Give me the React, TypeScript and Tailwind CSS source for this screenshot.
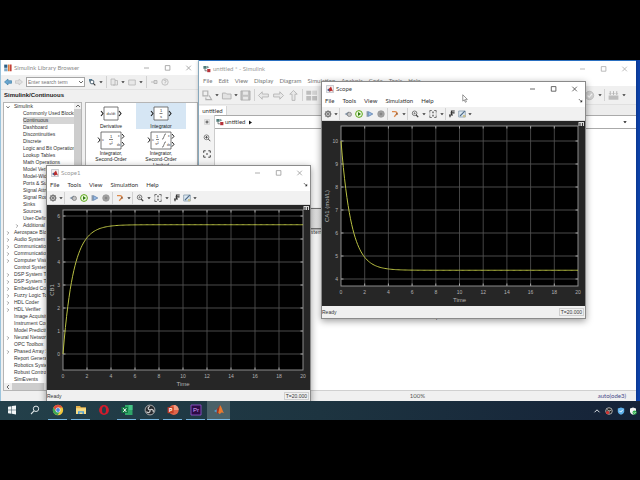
import React from 'react';

const UI = "font-['Lato','Liberation_Sans',sans-serif]";
const TAHOMA = "font-['Liberation_Sans','DejaVu_Sans',sans-serif]";

type Row = { label: string; depth: number; arrow?: 'open' | 'closed'; selected?: boolean };

const treeRows: Row[] = [
  { label: 'Simulink', depth: 0, arrow: 'open' },
  { label: 'Commonly Used Blocks', depth: 1 },
  { label: 'Continuous', depth: 1, selected: true },
  { label: 'Dashboard', depth: 1 },
  { label: 'Discontinuities', depth: 1 },
  { label: 'Discrete', depth: 1 },
  { label: 'Logic and Bit Operations', depth: 1 },
  { label: 'Lookup Tables', depth: 1 },
  { label: 'Math Operations', depth: 1 },
  { label: 'Model Verification', depth: 1 },
  { label: 'Model-Wide Utilities', depth: 1 },
  { label: 'Ports & Subsystems', depth: 1 },
  { label: 'Signal Attributes', depth: 1 },
  { label: 'Signal Routing', depth: 1 },
  { label: 'Sinks', depth: 1 },
  { label: 'Sources', depth: 1 },
  { label: 'User-Defined Functions', depth: 1 },
  { label: 'Additional Math & Discrete', depth: 1, arrow: 'closed' },
  { label: 'Aerospace Blockset', depth: 0, arrow: 'closed' },
  { label: 'Audio System Toolbox', depth: 0, arrow: 'closed' },
  { label: 'Communications System Toolbox', depth: 0, arrow: 'closed' },
  { label: 'Communications System Toolbox HDL', depth: 0, arrow: 'closed' },
  { label: 'Computer Vision System Toolbox', depth: 0, arrow: 'closed' },
  { label: 'Control System Toolbox', depth: 0 },
  { label: 'DSP System Toolbox', depth: 0, arrow: 'closed' },
  { label: 'DSP System Toolbox HDL', depth: 0, arrow: 'closed' },
  { label: 'Embedded Coder', depth: 0, arrow: 'closed' },
  { label: 'Fuzzy Logic Toolbox', depth: 0, arrow: 'closed' },
  { label: 'HDL Coder', depth: 0, arrow: 'closed' },
  { label: 'HDL Verifier', depth: 0, arrow: 'closed' },
  { label: 'Image Acquisition Toolbox', depth: 0 },
  { label: 'Instrument Control Toolbox', depth: 0 },
  { label: 'Model Predictive Control', depth: 0 },
  { label: 'Neural Network Toolbox', depth: 0, arrow: 'closed' },
  { label: 'OPC Toolbox', depth: 0 },
  { label: 'Phased Array System', depth: 0, arrow: 'closed' },
  { label: 'Report Generator', depth: 0 },
  { label: 'Robotics System', depth: 0 },
  { label: 'Robust Control', depth: 0 },
  { label: 'SimEvents', depth: 0 },
];

function WindowButtons({ color }: { color: string }) {
  return (
    <div className="ml-auto flex shrink-0 gap-3">
      <button aria-label="Minimize" className={`h-2 w-[9px] ${color}`}>
        <svg viewBox="0 0 9 8" className="h-2 w-[9px]"><path d="M2 4h5" stroke="currentColor" strokeWidth=".8" /></svg>
      </button>
      <button aria-label="Maximize" className={`h-2 w-[9px] ${color}`}>
        <svg viewBox="0 0 9 8" className="h-2 w-[9px]"><path d="M2.3 1.6h4.6v4.6H2.3z" fill="none" stroke="currentColor" strokeWidth=".8" /></svg>
      </button>
      <button aria-label="Close" className={`h-2 w-[9px] ${color}`}>
        <svg viewBox="0 0 9 8" className="h-2 w-[9px]"><path d="M2.3 1.7l4.6 4.6M6.9 1.7L2.3 6.3" stroke="currentColor" strokeWidth=".8" /></svg>
      </button>
    </div>
  );
}

function MatlabIcon() {
  return (
    <svg viewBox="0 0 8 8" className="size-2 shrink-0">
      <path d="M.5 .5h7v7h-7z" fill="#f3eeee" stroke="#aab0b8" strokeWidth=".6" />
      <path d="M1 5l2-1.4L4.4 6l-1 .6z" fill="#3b5a8c" />
      <path d="M2.8 4L5 1.6l2 5-1.8-.9-1.6 1.1z" fill="#b92c2c" />
    </svg>
  );
}

function SimulinkIcon() {
  return (
    <svg viewBox="0 0 8 8" className="size-2 shrink-0">
      <path d="M.4 1h3.2v2.8H.4z" fill="#4f7a77" />
      <path d="M4 .8l2.4 1.4L4 3.6z" fill="#7d9694" />
      <path d="M4.2 4h3.2v3.2H4.2z" fill="#b5323a" />
      <path d="M2 4v1.8h2" fill="none" stroke="#555" strokeWidth=".7" />
    </svg>
  );
}

function LibraryIcon() {
  return (
    <svg viewBox="0 0 8 8" className="size-2 shrink-0">
      <path d="M.2.6h3.2v3.2H.2z" fill="#2c5f86" />
      <path d="M4 .6h1.7v6.6H4z" fill="#e07a3c" />
      <path d="M.2 4.3h3.4v3H.2z" fill="#7fa9c6" />
      <path d="M6 .6h1.6v6.6H6z" fill="#c3423a" />
    </svg>
  );
}

function Caret({ color = '#333' }: { color?: string }) {
  return (
    <svg viewBox="0 0 4 4" className="size-1 shrink-0">
      <path d="M.3 1.2h3.4L2 3.2z" fill={color} />
    </svg>
  );
}

function Separator() {
  return <span className="h-3 w-px shrink-0 bg-[#d2d2d2]" />;
}

function DockArrow() {
  return (
    <svg viewBox="0 0 5 5" className="size-[5px]">
      <path d="M.8 1l2 2" stroke="#444" strokeWidth=".7" />
      <path d="M4.2 1.8v2.4H1.8z" fill="#333" />
    </svg>
  );
}

function ToolButton({ label, children, wide }: { label: string; children: React.ReactNode; wide?: boolean }) {
  return (
    <button aria-label={label} className={wide ? 'h-[13px] w-[13px] shrink-0' : 'h-2 w-2 shrink-0'}>
      <svg viewBox="0 0 8 8" className="h-full w-full">{children}</svg>
    </button>
  );
}

function ScopeToolbar() {
  return (
    <div className="flex h-[14px] shrink-0 items-center border-b border-[#d9d9d9] bg-[#f1f1f1] pl-[2px]">
      <ToolButton label="Configuration">
        <circle cx="4" cy="4" r="2.5" fill="#ddd" stroke="#777" strokeWidth="1.3" />
        <circle cx="4" cy="4" r=".9" fill="#555" />
        <path d="M4 .3v1M4 6.7v1M.3 4h1M6.7 4h1M1.4 1.4l.7.7M5.9 5.9l.7.7M6.6 1.4l-.7.7M2.1 5.9l-.7.7" stroke="#777" strokeWidth=".8" />
      </ToolButton>
      <span className="flex items-center gap-px pl-[2px]"><Caret /><Separator /></span>
      <span className="ml-1 flex gap-[3px]">
        <ToolButton label="Step back">
          <path d="M.6 4L5 1.4v5.2z" fill="#8294a8" />
          <circle cx="5.4" cy="4.4" r="2.1" fill="#c4c4c4" stroke="#777" strokeWidth=".7" />
        </ToolButton>
        <ToolButton label="Run">
          <circle cx="4" cy="4" r="3.4" fill="#eefbe0" stroke="#5da51c" strokeWidth="1" />
          <path d="M3 2.1L6 4 3 5.9z" fill="#2f7a12" />
        </ToolButton>
        <ToolButton label="Step forward">
          <path d="M1.2 1.2v5.6" stroke="#60758d" strokeWidth="1" />
          <path d="M2.4 1.6L6.8 4 2.4 6.4z" fill="#9bbbe3" stroke="#5579a8" strokeWidth=".7" />
        </ToolButton>
        <ToolButton label="Stop">
          <circle cx="4" cy="4" r="3.3" fill="#a5a5a5" stroke="#8b8b8b" strokeWidth=".6" />
          <path d="M2.7 2.7h2.6v2.6H2.7z" fill="#858585" />
        </ToolButton>
      </span>
      <span className="ml-[2px] flex items-center gap-[3px]">
        <Separator />
        <ToolButton label="Highlight signal">
          <path d="M1 1.6h3a2 2 0 0 1 2 2.2L3.2 6.8" fill="none" stroke="#dd8a4c" strokeWidth="1.3" />
          <path d="M4.4 4.6h2.8L6 2.6z" fill="#8a5a3c" />
        </ToolButton>
        <Caret />
      </span>
      <span className="ml-px flex items-center gap-[3px]">
        <Separator />
        <ToolButton label="Zoom">
          <circle cx="3.6" cy="3.3" r="2.3" fill="#fff" stroke="#666" strokeWidth=".9" />
          <path d="M2.4 3.3h2.4M3.6 2.1v2.4" stroke="#555" strokeWidth=".6" />
          <path d="M5.2 5l2 2.2" stroke="#444" strokeWidth="1.2" />
        </ToolButton>
        <Caret />
        <ToolButton label="Scale axes">
          <path d="M.8 2.5V.5h2M5.2.5h2v2M7.2 5.500v2h-2M2.800 7.500h-2v-2" fill="none" stroke="#666" strokeWidth=".9" />
          <path d="M4 1.500v1.800M4 6.500V4.700" stroke="#333" strokeWidth="1.100" />
          <path d="M.8 2.500v3M7.200 2.500v3" stroke="#aaa" strokeWidth=".7" />
        </ToolButton>
        <Caret />
      </span>
      <span className="ml-px flex items-center gap-[2px]">
        <Separator />
        <ToolButton label="Triggers">
          <path d="M2 7.2V5h1.5V1h3.2M1 5h4M2.6 2.8h4" fill="none" stroke="#333" strokeWidth="1.2" />
        </ToolButton>
        <ToolButton label="Cursor measurements">
          <path d="M.7 1h6.6v6H.7z" fill="#dce8f2" stroke="#8499ab" strokeWidth=".8" />
          <path d="M2 6L6.8 1.2" stroke="#506d88" strokeWidth="1.1" />
          <path d="M5 5h2.4v2.2H5z" fill="#c9c08e" />
        </ToolButton>
        <Caret />
      </span>
    </div>
  );
}

type PlotProps = {
  left: number;
  width: number;
  // y of the topmost labelled gridline
  firstY: number;
  yTicks: number[];
  yLabel: string;
  start: number;
  end: number;
};

type ScopeProps = PlotProps & { title: string; titleColor: string; buttonColor: string };

function ScopePlot({ left, width, firstY, yTicks, yLabel, start, end }: PlotProps) {
  const top = 5;
  const bottom = 165;
  const right = left + width;
  const step = 23;
  const x = (t: number) => left + (t / 20) * width;
  const y = (v: number) => firstY + (yTicks[0] - v) * step;
  const curve = Array.from({ length: 201 }, (_, i) => {
    const t = i / 10;
    const v = end + (start - end) * Math.exp(-t / 0.87);
    return `${i ? 'L' : 'M'}${x(t).toFixed(2)} ${y(v).toFixed(2)}`;
  }).join('');
  const xTicks = [0, 2, 4, 6, 8, 10, 12, 14, 16, 18, 20];

  return (
    <svg viewBox="0 0 263 185" className="block w-full bg-[#262626] font-['Liberation_Sans',sans-serif]">
      <rect x={left} y={top} width={width} height={bottom - top} fill="#000" />
      {xTicks.slice(1, -1).map((t) => (
        <g key={t}>
          <path d={`M${x(t)} ${top}V${bottom}`} stroke="#4c4c4c" strokeWidth=".9" />
          <path d={`M${x(t)} ${top}v2.5M${x(t)} ${bottom}v-2.5`} stroke="#b0b0b0" strokeWidth=".9" />
        </g>
      ))}
      {yTicks.map((v) => (
        <g key={v}>
          <path d={`M${left} ${y(v)}H${right}`} stroke="#525252" strokeWidth=".9" />
          <path d={`M${left} ${y(v)}h2.5M${right} ${y(v)}h-2.5`} stroke="#b0b0b0" strokeWidth=".9" />
          <text x={left - 3} y={y(v) + 2} textAnchor="end" fontSize="5" fill="#b4b4b4">{v}</text>
        </g>
      ))}
      <rect x={left} y={top} width={width} height={bottom - top} fill="none" stroke="#9a9a9a" strokeWidth=".9" />
      <path d={curve} fill="none" stroke="#b9c043" strokeWidth="1" />
      {xTicks.map((t) => (
        <text key={t} x={x(t)} y={bottom + 8} textAnchor="middle" fontSize="5" fill="#b4b4b4">{t}</text>
      ))}
      <text x={left + width / 2} y={bottom + 16} textAnchor="middle" fontSize="6" fill="#b4b4b4">Time</text>
      <text transform="translate(7 85) rotate(-90)" textAnchor="middle" fontSize="6" fill="#b4b4b4">{yLabel}</text>
      <path d="M256.5 1h5.5v4h-5.5z" fill="#d8d8d8" />
      <path d="M258 2v3M260.5 2v3" stroke="#222" strokeWidth=".9" />
    </svg>
  );
}

function ScopeWindow({ title, titleColor, buttonColor, ...plot }: ScopeProps) {
  return (
    <section className={`flex flex-col overflow-hidden border border-[#8a8a8a] bg-white shadow-[0_2px_7px_rgba(0,0,0,0.4)] ${UI}`}>
      <header className="flex h-3 items-center gap-[2px] pl-1 pr-[6px] pt-px">
        <MatlabIcon />
        <h2 className={`text-[6px] leading-[8px] ${titleColor}`}>{title}</h2>
        <WindowButtons color={buttonColor} />
      </header>
      <nav className="flex h-[13px] items-center gap-2 pl-[3px] pr-[2px] text-[6px] leading-[8px] text-[#333]">
        <button>File</button>
        <button>Tools</button>
        <button>View</button>
        <button>Simulation</button>
        <button>Help</button>
        <span className="ml-auto"><DockArrow /></span>
      </nav>
      <ScopeToolbar />
      <ScopePlot {...plot} />
      <footer className={`flex h-3 items-center justify-between bg-[#f0f0f0] pr-px text-[5px] leading-[6px] text-[#333] ${TAHOMA}`}>
        <span>Ready</span>
        <span className="border border-[#cfcfcf] px-px">T=20.000</span>
      </footer>
    </section>
  );
}

function LibraryBlock({ name, selected, children }: { name: string[]; selected?: boolean; children: React.ReactNode }) {
  return (
    <figure className={`flex w-[50px] flex-col items-center ${selected ? 'bg-[#d6e6f4]' : ''}`}>
      <svg viewBox="0 0 28 20" className="h-5 w-7">{children}</svg>
      <figcaption className="text-center text-[5px] leading-[6px] text-[#222]">
        {name.map((line) => <span key={line} className="block">{line}</span>)}
      </figcaption>
    </figure>
  );
}

function LibraryBrowser() {
  return (
    <section className={`flex min-h-0 flex-col border-l border-r border-[#9cc4dc] bg-[#f0f0f0] ${TAHOMA}`}>
      <header className={`flex h-[15px] shrink-0 items-center gap-[2px] bg-white pl-[3px] pr-[5px] ${UI}`}>
        <LibraryIcon />
        <h2 className="text-[6px] leading-[8px] text-[#8c8c8c]">Simulink Library Browser</h2>
        <WindowButtons color="text-[#999]" />
      </header>
      <div className="flex h-[15px] shrink-0 items-center gap-[3px] border-b border-[#e2e2e2] pl-[3px]">
        <ToolButton label="Back"><path d="M.5 4L4 1v1.7h3.5v2.6H4V7z" fill="#69a5cf" stroke="#33779f" strokeWidth=".6" /></ToolButton>
        <ToolButton label="Forward"><path d="M7.5 4L4 1v1.7H.5v2.6H4V7z" fill="#e1e1e1" stroke="#bbb" strokeWidth=".6" /></ToolButton>
        <label className="flex h-[10px] w-[59px] items-center border border-[#a5a5a5] bg-white pl-px">
          <input aria-label="Search term" placeholder="Enter search term" className="min-w-0 flex-1 text-[5px] leading-[6px] outline-none placeholder:text-[#777]" />
          <svg viewBox="0 0 6 4" className="h-1 w-[6px]"><path d="M1 1l2 2 2-2" fill="none" stroke="#444" strokeWidth=".8" /></svg>
        </label>
        <ToolButton label="Search">
          <path d="M1 1h3v2.5H1z" fill="#55809b" />
          <circle cx="4" cy="4" r="1.9" fill="#fff" stroke="#3e5666" strokeWidth=".9" />
          <path d="M5.3 5.3l2 2" stroke="#333" strokeWidth="1.1" />
        </ToolButton>
        <Caret />
        <Separator />
        <ToolButton label="New"><path d="M1 1h4v6H1zM5 2.5h2.5V7H3" fill="#e8e8e8" stroke="#b5b5b5" strokeWidth=".8" /></ToolButton>
        <Caret />
        <ToolButton label="Open"><path d="M.7 2h6.6v5H.7z" fill="#e8e8e8" stroke="#b5b5b5" strokeWidth=".8" /></ToolButton>
        <Caret />
        <Separator />
        <ToolButton label="Pin"><path d="M1 4h3M4 2.5h3v3H4z" fill="#ddd" stroke="#b0b0b0" strokeWidth=".8" /></ToolButton>
        <ToolButton label="Help">
          <circle cx="4" cy="4" r="3.2" fill="#eee" stroke="#b5b5b5" strokeWidth=".8" />
          <path d="M2.9 3a1.1 1.1 0 1 1 1.1 1.3v.7M4 5.6v.6" fill="none" stroke="#aaa" strokeWidth=".7" />
        </ToolButton>
      </div>
      <h3 className="h-3 shrink-0 pl-[3px] pt-px text-[6px] font-bold leading-[8px] text-[#222]">Simulink/Continuous</h3>
      <div className="flex min-h-0 flex-1 gap-[3px] pb-[10px] pl-[2px]">
        <div className="flex w-[79px] shrink-0 flex-col border border-[#b5b5b5] bg-white">
          <div className="flex min-h-0 flex-1">
            <ul className="min-w-0 flex-1 overflow-hidden">
              {treeRows.map((row) => (
                <li key={row.label} className={`flex h-[7px] items-center whitespace-nowrap text-[5px] leading-[7px] text-[#333] ${row.depth ? 'pl-[11px]' : 'pl-[2px]'}`}>
                  <svg viewBox="0 0 4 4" className="mr-1 size-1 shrink-0">
                    {row.arrow === 'open' && <path d="M.4 1.2L2 3 3.6 1.2" fill="none" stroke="#444" strokeWidth=".7" />}
                    {row.arrow === 'closed' && <path d="M1.2.4L2.8 2 1.2 3.6" fill="none" stroke="#777" strokeWidth=".7" />}
                  </svg>
                  <span className={row.selected ? 'w-full bg-[#d5d5d5]' : ''}>{row.label}</span>
                </li>
              ))}
            </ul>
            <div className="flex w-[7px] shrink-0 flex-col items-center bg-[#f0f0f0]">
              <svg viewBox="0 0 6 6" className="size-[6px]"><path d="M1 4l2-2 2 2" fill="none" stroke="#444" strokeWidth=".8" /></svg>
              <span className="h-14 w-full bg-[#cdcdcd]" />
            </div>
          </div>
          <div className="flex h-[7px] shrink-0 items-center bg-[#f0f0f0]">
            <svg viewBox="0 0 8 6" className="h-[6px] w-2"><path d="M5 1L3 3l2 2" fill="none" stroke="#444" strokeWidth=".8" /></svg>
            <span className="h-full w-8 bg-[#cdcdcd]" />
          </div>
        </div>
        <div className="flex flex-1 flex-wrap content-start gap-y-px border border-[#b5b5b5] bg-white">
          <LibraryBlock name={['Derivative']}>
            <path d="M7 4h14v13H7z" fill="#fff" stroke="#555" strokeWidth=".8" />
            <path d="M4 8l2 2.5L4 13M22 8l2 2.5L22 13" fill="none" stroke="#222" strokeWidth="1.1" />
            <text x="14" y="12" textAnchor="middle" fontSize="4" fill="#444">du/dt</text>
          </LibraryBlock>
          <LibraryBlock name={['Integrator']} selected>
            <path d="M7 4h14v13H7z" fill="#fff" stroke="#555" strokeWidth=".8" />
            <path d="M4 8l2 2.5L4 13M22 8l2 2.5L22 13" fill="none" stroke="#222" strokeWidth="1.1" />
            <path d="M12.5 10.5h3" stroke="#333" strokeWidth=".6" />
            <text x="14" y="9" textAnchor="middle" fontSize="4" fill="#333">1</text>
            <text x="14" y="15" textAnchor="middle" fontSize="4" fill="#333">s</text>
          </LibraryBlock>
          <LibraryBlock name={['Integrator,', 'Second-Order']}>
            <path d="M4 2h20v17H4z" fill="#fff" stroke="#555" strokeWidth=".8" />
            <path d="M1 7.5L3 10l-2 2.5M25 4l2 2.3-2 2.3M25 12l2 2.3-2 2.3" fill="none" stroke="#222" strokeWidth="1" />
            <path d="M12 9.5h4" stroke="#333" strokeWidth=".6" />
            <text x="5" y="11" fontSize="3" fill="#333">u</text>
            <text x="14" y="8" textAnchor="middle" fontSize="4" fill="#333">1</text>
            <text x="14" y="15" textAnchor="middle" fontSize="4" fill="#333">s²</text>
            <text x="21" y="7" fontSize="3" fill="#333">x</text>
            <text x="20" y="16" fontSize="3" fill="#333">dx</text>
          </LibraryBlock>
          <LibraryBlock name={['Integrator,', 'Second-Order', 'Limited']}>
            <path d="M4 2h20v17H4z" fill="#fff" stroke="#555" strokeWidth=".8" />
            <path d="M1 7.5L3 10l-2 2.5M25 4l2 2.3-2 2.3M25 12l2 2.3-2 2.3" fill="none" stroke="#222" strokeWidth="1" />
            <path d="M9 9.5h3M15 9h1l2-5h1M15 17h1l2-5h1" fill="none" stroke="#333" strokeWidth=".6" />
            <text x="5" y="11" fontSize="3" fill="#333">u</text>
            <text x="10" y="8" textAnchor="middle" fontSize="4" fill="#333">1</text>
            <text x="10" y="15" textAnchor="middle" fontSize="4" fill="#333">s²</text>
            <text x="21" y="7" fontSize="3" fill="#333">x</text>
            <text x="20" y="16" fontSize="3" fill="#333">dx</text>
          </LibraryBlock>
        </div>
      </div>
    </section>
  );
}

function ModelEditor() {
  return (
    <section className={`flex min-h-0 flex-col border-t border-[#2a6fc0] bg-white shadow-[0_0_4px_rgba(0,0,0,0.35)] ${UI}`}>
      <header className="flex h-[14px] shrink-0 items-center gap-[2px] pl-1 pr-[7px] pt-px">
        <SimulinkIcon />
        <h2 className="text-[6px] leading-[8px] text-[#999]">untitled * - Simulink</h2>
        <WindowButtons color="text-[#aaa]" />
      </header>
      <nav className="flex h-[11px] shrink-0 items-center gap-[6px] pl-1 text-[6px] leading-[8px] text-[#777]">
        {['File', 'Edit', 'View', 'Display', 'Diagram', 'Simulation', 'Analysis', 'Code', 'Tools', 'Help'].map((item) => (
          <button key={item}>{item}</button>
        ))}
      </nav>
      <div className="flex h-[19px] shrink-0 items-center justify-between border-b border-[#e0e0e0] bg-[#f0f0f0] pl-[2px] pr-[10px]">
        <div className="flex items-center gap-[2px]">
          <div className="flex items-center gap-px">
            <ToolButton wide label="Undo"><path d="M1.2 1.2h3v3h-3zM3 5.200v1.300h3.500L5 4" fill="none" stroke="#b0b0b0" strokeWidth=".7" /></ToolButton>
            <Caret />
            <ToolButton wide label="Open"><path d="M1.5 2.5h2l.6.6h2.7v3H1.5z" fill="#e2e2e2" stroke="#b4b4b4" strokeWidth=".6" /></ToolButton>
            <Caret />
            <ToolButton wide label="Save">
              <path d="M1.2 1.2h5.6v5.6H1.2z" fill="#c2c2c2" stroke="#aaa" strokeWidth=".5" />
              <path d="M2.5 1.5h3v2h-3zM2.5 4.7h3v1.8h-3z" fill="#e8e8e8" />
            </ToolButton>
          </div>
          <Separator />
          <ToolButton wide label="Back"><path d="M.9 4l2.3-2.3v1.400h3.800v1.800H3.200v1.400z" fill="#e8e8e8" stroke="#b0b0b0" strokeWidth=".5" /></ToolButton>
          <ToolButton wide label="Forward"><path d="M7.100 4L4.800 1.700v1.400H1v1.800h3.800v1.400z" fill="#e8e8e8" stroke="#b0b0b0" strokeWidth=".5" /></ToolButton>
          <ToolButton wide label="Up"><path d="M4 .9l2.300 2.300H4.900V7H3.100V3.200H1.700z" fill="#e8e8e8" stroke="#b0b0b0" strokeWidth=".5" /></ToolButton>
          <Separator />
          <ToolButton wide label="Library">
            <path d="M.8 1h3v2.6h-3zM.8 4.3h3V7h-3zM4.4 4.3h3V7h-3z" fill="#bdbdbd" />
            <path d="M4.4 1h3v2.6h-3z" fill="#d2d2d2" />
          </ToolButton>
        </div>
        <div className="flex items-center gap-[2px]">
          <ToolButton wide label="Check">
            <circle cx="4" cy="4" r="2.6" fill="#d0d0d0" stroke="#bdbdbd" strokeWidth=".5" />
            <path d="M2.8 4l1 1 1.7-2" fill="none" stroke="#f5f5f5" strokeWidth=".8" />
          </ToolButton>
          <Caret />
          <Separator />
          <ToolButton wide label="Build">
            <path d="M1 4h6v2.6H1z" fill="#bdbdbd" />
            <path d="M2 1.3v2M4 1.3v2M6 1.3v2M1.4 2.7l.6.7.6-.7M3.4 2.7l.6.7.6-.7M5.4 2.7l.6.7.6-.7" fill="none" stroke="#aaa" strokeWidth=".5" />
          </ToolButton>
          <Caret />
        </div>
      </div>
      <div className="flex h-[10px] shrink-0 items-end bg-[#ededed]">
        <button className="h-[9px] w-7 border-r border-[#d5d5d5] bg-white text-[6px] leading-[8px] text-[#333]">untitled</button>
      </div>
      <div className="flex min-h-0 flex-1">
        <aside className="flex w-4 shrink-0 flex-col items-center gap-2 border-r border-[#ccc] bg-[#f3f3f3] pt-[3px]">
          <ToolButton label="Hide browser"><path d="M1.5 1.5h5v5h-5z" fill="#e5e5e5" stroke="#ccc" strokeWidth=".6" /><path d="M2.5 4h3M4 2.5v3" stroke="#444" strokeWidth=".9" /></ToolButton>
          <ToolButton label="Zoom"><circle cx="3.5" cy="3.3" r="2.4" fill="#fff" stroke="#666" strokeWidth=".8" /><path d="M2.2 3.3h2.6M3.5 2v2.6M5.3 5l2 2.2" stroke="#444" strokeWidth=".9" /></ToolButton>
          <ToolButton label="Fit to view"><path d="M.7 2.8V.8h2M5.3.8h2v2M7.3 5.2v2h-2M2.7 7.2h-2v-2" fill="none" stroke="#444" strokeWidth="1" /><path d="M3 3h2v2H3z" fill="#999" /></ToolButton>
        </aside>
        <div className="flex min-w-0 flex-1 flex-col">
          <div className="flex h-[14px] shrink-0 items-center gap-px border-y border-[#aaa] pl-px pr-[9px] text-[6px] leading-[8px] text-[#333]">
            <SimulinkIcon />
            <span>untitled</span>
            <svg viewBox="0 0 5 5" className="ml-[2px] size-[5px]"><path d="M1 .5l3 2-3 2z" fill="#111" /></svg>
            <span className="ml-auto"><Caret color="#111" /></span>
          </div>
          <div className="relative min-h-0 flex-1 overflow-hidden">
            {/* blocks on the model canvas */}
            <div className="absolute left-[72px] top-[79px] h-[21px] w-[60px] border border-[#777] bg-linear-to-r from-[#d8d8d8] to-[#f6f6f6] shadow-[1px_1px_2px_rgba(0,0,0,0.4)]" />
            <span className="absolute left-[91px] top-[100px] text-[5px] leading-[6px] text-[#444]">System</span>
            <span className="absolute left-[213px] top-[185px] text-[5px] leading-[6px] text-[#333]">Scope</span>
          </div>
        </div>
      </div>
      <footer className="grid h-[11px] shrink-0 grid-cols-3 items-center border-t border-[#d0d0d0] bg-[#f0f0f0] text-[6px] leading-[8px] text-[#555]">
        <span />
        <span className="text-center">100%</span>
        <span className="pr-[10px] text-right text-[#4a4a8a]">auto(ode3)</span>
      </footer>
    </section>
  );
}

function TaskButton({ label, running, active, children }: { label: string; running?: boolean; active?: boolean; children: React.ReactNode }) {
  return (
    <button
      aria-label={label}
      className={`flex h-full items-center justify-center border-b ${active ? 'w-[23px] bg-[#4a6168]' : 'mx-[2px] w-[19px]'} ${running ? 'border-[#76b4dd]' : 'border-transparent'}`}
    >
      <svg viewBox="0 0 12 12" className="size-3">{children}</svg>
    </button>
  );
}

function Taskbar() {
  return (
    <footer className="flex h-[19px] shrink-0 items-center bg-linear-to-r from-[#23404a] via-[#1d3440] to-[#152238]">
      <TaskButton label="Start">
        <path d="M2 2.7l3.5-.5v3.5H2zM6 2.1l4-.6v4.2H6zM2 6.2h3.5v3.5L2 9.2zM6 6.2h4v4.2l-4-.6z" fill="#f2f5f6" />
      </TaskButton>
      <TaskButton label="Search">
        <circle cx="7" cy="4.8" r="2.7" fill="none" stroke="#dfe6e8" strokeWidth="1" />
        <path d="M5 6.9L2 10" stroke="#dfe6e8" strokeWidth="1.1" />
      </TaskButton>
      <TaskButton label="Chrome" running>
        <circle cx="6" cy="6" r="5.2" fill="#f0c63c" />
        <path d="M1.5 3.4A5.2 5.2 0 0 1 10.5 3.4L6 3.6 4 7.2z" fill="#dc4b3e" />
        <path d="M1.5 3.4A5.2 5.2 0 0 0 5.6 11.2L8 7.4 4 7.5z" fill="#3aa757" />
        <circle cx="6" cy="6" r="2.5" fill="#f4f4f4" />
        <circle cx="6" cy="6" r="1.9" fill="#4a86e0" />
      </TaskButton>
      <TaskButton label="File Explorer" running>
        <path d="M1 2h4l1 1.2h5V10H1z" fill="#e3b04b" />
        <path d="M1 4.2h10V10H1z" fill="#f7dc84" />
        <path d="M3 7.2h6V10H7.5V8.6h-3V10H3z" fill="#4c9ed8" />
      </TaskButton>
      <TaskButton label="Opera">
        <ellipse cx="6" cy="6" rx="4.9" ry="5.1" fill="#d31b2b" />
        <ellipse cx="6" cy="6" rx="2" ry="3.5" fill="#23404a" />
      </TaskButton>
      <TaskButton label="Excel" running>
        <path d="M4 1h7.5v10H4z" fill="#2fa568" />
        <path d="M7.7 1h3.8v5H7.7z" fill="#45c486" />
        <path d="M.5 3h6.5v6H.5z" fill="#127a43" />
        <path d="M2.3 4.3l3 3.6M5.3 4.3l-3 3.6" stroke="#fff" strokeWidth="1" />
      </TaskButton>
      <TaskButton label="OBS" running>
        <circle cx="6" cy="6" r="4.9" fill="#272a2e" stroke="#c8c8c8" strokeWidth=".8" />
        <path d="M6 6c-2.5-.5-2.5-3 0-3.5M6 6c2-1.5 4 0 3.2 2.3M6 6c.5 2.5-2 3.5-3.6 1.7" fill="none" stroke="#d0d0d0" strokeWidth="1.2" />
      </TaskButton>
      <TaskButton label="PowerPoint" running>
        <circle cx="6.8" cy="6" r="4.9" fill="#e0654a" />
        <path d="M6.8 1.1a4.9 4.9 0 0 1 4.9 4.9H6.8z" fill="#f49b80" />
        <path d="M.6 3.2h6v6h-6z" fill="#c43e24" />
        <text x="3.6" y="8" textAnchor="middle" fontSize="5" fill="#fff" className="font-['Liberation_Sans',sans-serif] font-bold">P</text>
      </TaskButton>
      <TaskButton label="Premiere" running>
        <path d="M1 1h10v10H1z" fill="#2c0a45" stroke="#9a56d8" strokeWidth=".8" />
        <text x="6" y="8.2" textAnchor="middle" fontSize="6" fill="#d9a4ff" className="font-['Liberation_Sans',sans-serif]">Pr</text>
      </TaskButton>
      <TaskButton label="MATLAB" running active>
        <path d="M1 7l2.8-1.8L5.3 7 3.6 8.6z" fill="#4f9fd0" />
        <path d="M3.8 5.2C5.6 4 6 1.5 7 1.2L6.4 8 4.5 9.8 3.6 8.6z" fill="#a03420" />
        <path d="M7 1.2c1.3.6 2.3 5 4 8-1.8-1.2-2.7-1.2-4.2 1L5.3 8.8z" fill="#ea7a2e" />
      </TaskButton>
      <div className="ml-auto flex items-center gap-1 pr-[3px]">
        <button aria-label="Show hidden icons" className="h-2 w-2">
          <svg viewBox="0 0 8 8" className="size-2"><path d="M1.5 5.3L4 2.8l2.5 2.5" fill="none" stroke="#dde3e8" strokeWidth="1" /></svg>
        </button>
        <svg viewBox="0 0 8 8" className="size-2">
          <circle cx="4" cy="4" r="3.3" fill="#222" stroke="#ccc" strokeWidth=".8" />
          <path d="M4 4L2 2.5M4 4l2.3-.8M4 4v2.5" stroke="#ccc" strokeWidth=".8" />
          <circle cx="2.6" cy="5.6" r="1.7" fill="#d23434" />
        </svg>
        <svg viewBox="0 0 8 8" className="size-2">
          <path d="M4 .5l3.2 1v2.7C7.2 6 5.7 7 4 7.7 2.3 7 .8 6 .8 4.2V1.5z" fill="#5fb0ea" />
          <path d="M2.4 3.8l1.3 1.3 2.2-2.4" fill="none" stroke="#fff" strokeWidth=".9" />
        </svg>
        <svg viewBox="0 0 8 8" className="size-2">
          <path d="M4 .5l3 1v2.7C7 6 5.7 7 4 7.7 2.3 7 1 6 1 4.2V1.5z" fill="#f2f2f2" />
          <circle cx="5.6" cy="5.6" r="2.1" fill="#2fae4d" />
          <path d="M4.6 5.6l.8.8 1.3-1.4" fill="none" stroke="#fff" strokeWidth=".7" />
        </svg>
      </div>
    </footer>
  );
}

export default function App() {
  return (
    <main className="flex min-h-screen flex-col justify-center bg-black">
      {/* desktop with its floating windows */}
      <div className="relative h-[341px] overflow-hidden bg-[#0d43ad]">
        <div className="absolute inset-y-0 left-0 grid w-[199px]"><LibraryBrowser /></div>
        <div className="absolute inset-y-0 left-[199px] right-1 grid"><ModelEditor /></div>
        <div className="absolute left-[46px] top-[105px] w-[265px]">
          <ScopeWindow
            title="Scope1"
            titleColor="text-[#999]"
            buttonColor="text-[#999]"
            left={16}
            width={240}
            firstY={11}
            yTicks={[6, 5, 4, 3, 2, 1, 0]}
            yLabel="CB1"
            start={0}
            end={5.62}
          />
        </div>
        <div className="absolute left-[321px] top-[21px] w-[265px]">
          <ScopeWindow
            title="Scope"
            titleColor="text-[#444]"
            buttonColor="text-[#444]"
            left={19}
            width={237}
            firstY={20}
            yTicks={[10, 9, 8, 7, 6, 5, 4]}
            yLabel="CA1 (mol/L)"
            start={10}
            end={4.38}
          />
        </div>
        <svg viewBox="0 0 8 12" className="absolute left-[462px] top-[34px] h-[9px] w-[6px]">
          <path d="M1 1v8.5l2-1.8 1.4 3.3 1.5-.7L4.5 7.2h2.7z" fill="#fff" stroke="#555" strokeWidth=".8" />
        </svg>
      </div>
      <Taskbar />
    </main>
  );
}
